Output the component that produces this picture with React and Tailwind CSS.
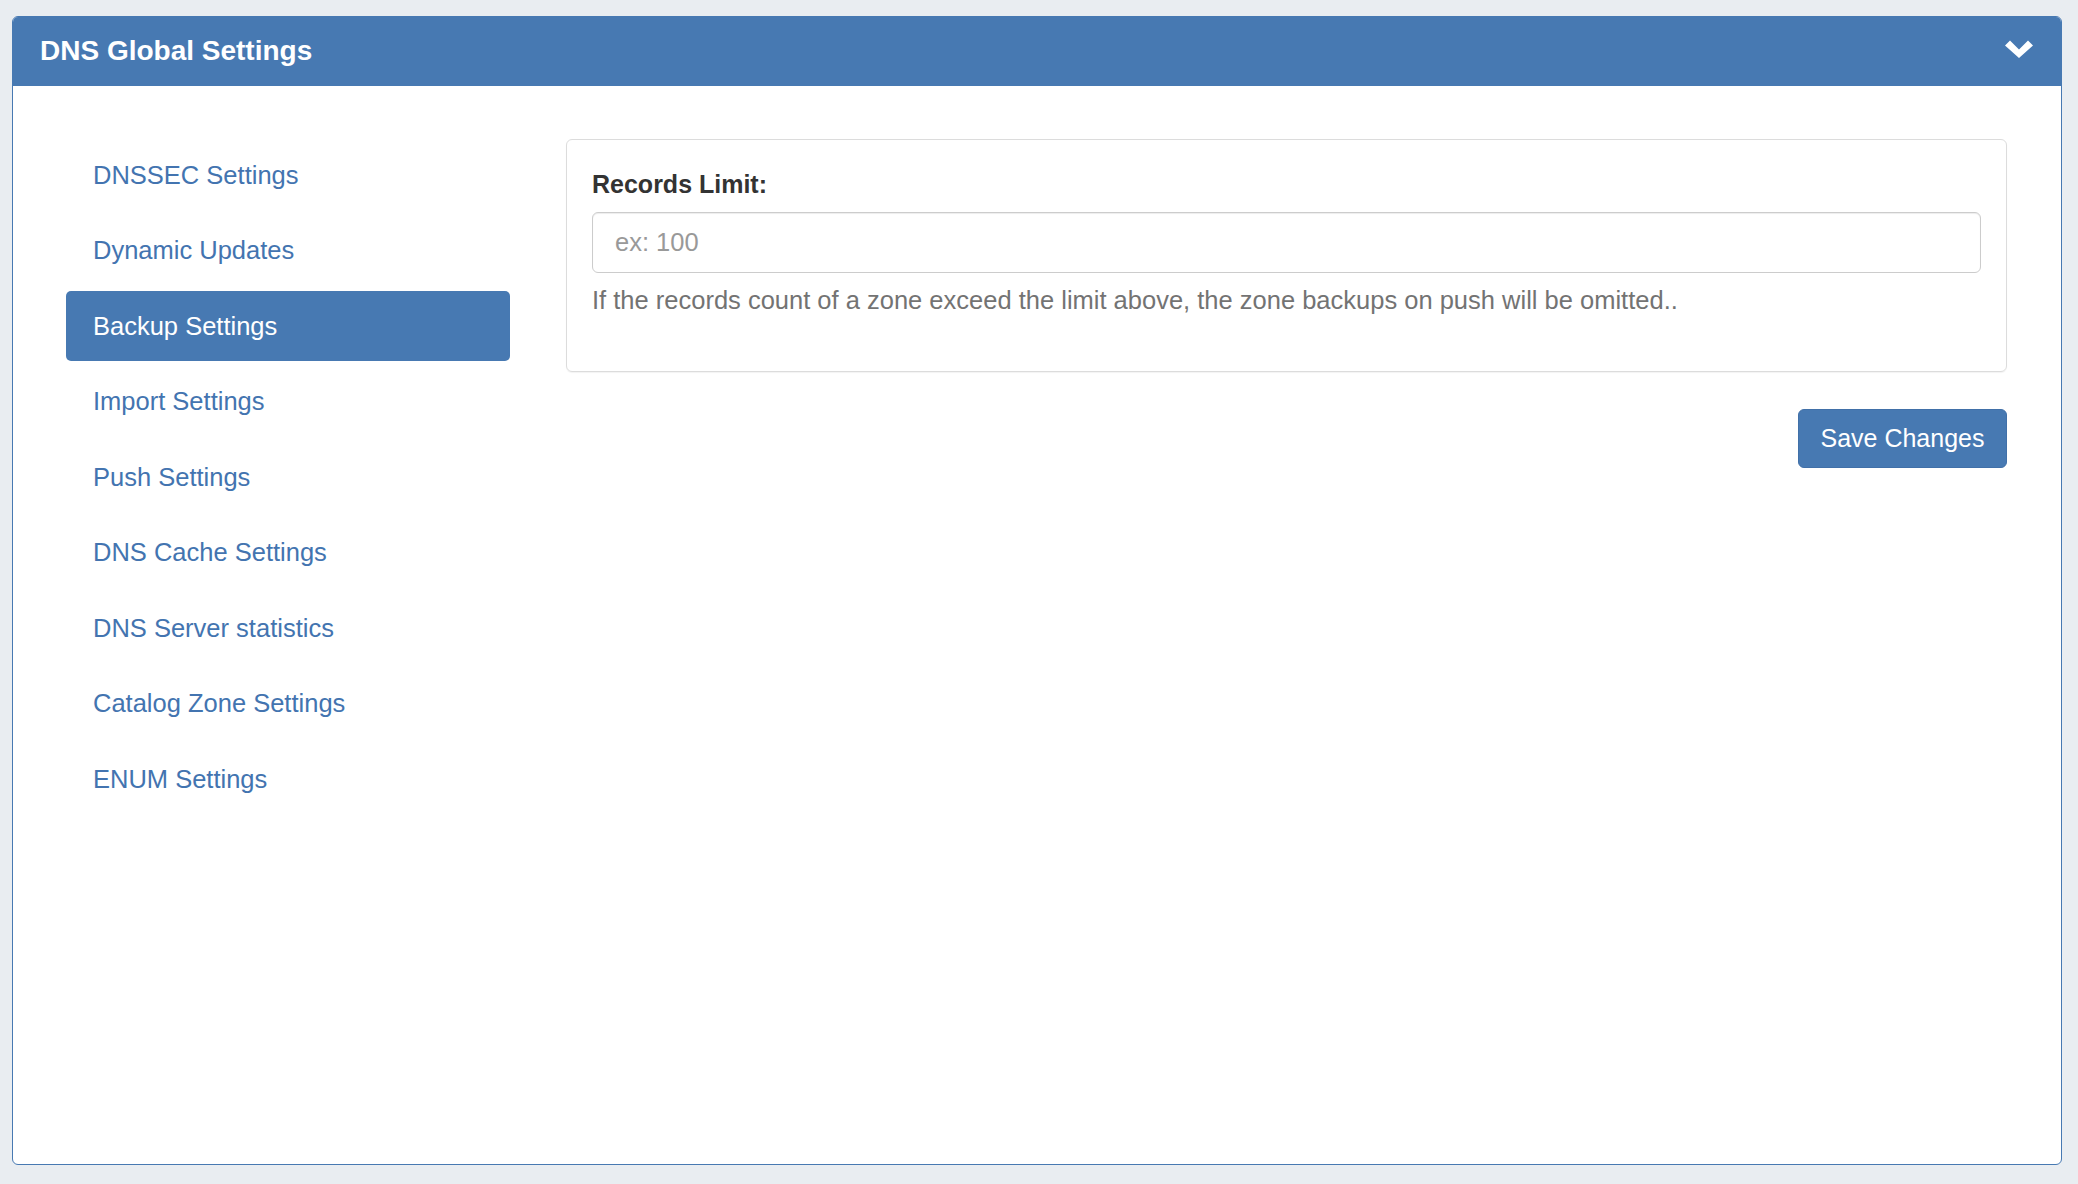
const navItems = [
  "DNSSEC Settings",
  "Dynamic Updates",
  "Backup Settings",
  "Import Settings",
  "Push Settings",
  "DNS Cache Settings",
  "DNS Server statistics",
  "Catalog Zone Settings",
  "ENUM Settings",
];

const active = "Backup Settings";

function ChevronDown() {
  return (
    <svg width="28" height="18" viewBox="0 0 28 18" className="mb-[5px]" aria-hidden="true">
      <polygon points="0,5.5 5,0.5 14,9.5 23,0.5 28,5.5 14,18" fill="#fff" />
    </svg>
  );
}

export default function App() {
  return (
    <div className="h-[1184px] bg-[#e9edf1] pt-[16px] pl-[12px] pr-[16px] pb-[19px] [font-family:'Liberation_Sans',Arial,sans-serif]">
      <section className="flex h-full flex-col rounded-[6px] border border-[#4779b2] bg-white">
        <header className="flex h-[69px] shrink-0 items-center justify-between rounded-t-[5px] bg-[#4779b2] pl-[27px] pr-[28px]">
          <h1 className="mb-[2px] text-[28px] font-bold text-white">DNS Global Settings</h1>
          <ChevronDown />
        </header>

        <div className="flex gap-[56px] pl-[53px] pr-[54px] pt-[53px]">
          <nav className="mt-[1px] flex w-[444px] shrink-0 flex-col gap-[5.5px]">
            {navItems.map((item) =>
              item === active ? (
                <a
                  key={item}
                  href="#"
                  className="flex h-[70px] items-center rounded-[5px] bg-[#4779b2] pl-[27px] text-[25.5px] text-white"
                >
                  {item}
                </a>
              ) : (
                <a
                  key={item}
                  href="#"
                  className="flex h-[70px] items-center rounded-[5px] pl-[27px] text-[25.5px] text-[#4374b0]"
                >
                  {item}
                </a>
              )
            )}
          </nav>

          <div className="flex flex-1 flex-col">
            <div className="rounded-[6px] border border-[#dcdcdc] px-[25px] pt-[27px] pb-[54px] shadow-[0_1px_1px_rgba(0,0,0,0.05)]">
              <label className="block text-[25px] leading-[34px] font-bold text-[#333]">
                Records Limit:
              </label>
              <input
                type="text"
                placeholder="ex: 100"
                className="mt-[11px] block h-[61px] w-full rounded-[6px] border border-[#cccccc] px-[22px] text-[25.5px] text-[#555] placeholder:text-[#999] shadow-[inset_0_1px_1px_rgba(0,0,0,0.075)] outline-none"
              />
              <p className="mt-[10px] text-[25.5px] leading-[34px] text-[#737373]">
                If the records count of a zone exceed the limit above, the zone backups on push will be omitted..
              </p>
            </div>

            <div className="mt-[37px] flex justify-end">
              <button
                type="button"
                className="h-[59px] w-[209px] rounded-[6px] border border-[#4170a8] bg-[#4779b2] text-[25px] text-white"
              >
                Save Changes
              </button>
            </div>
          </div>
        </div>
      </section>
    </div>
  );
}
